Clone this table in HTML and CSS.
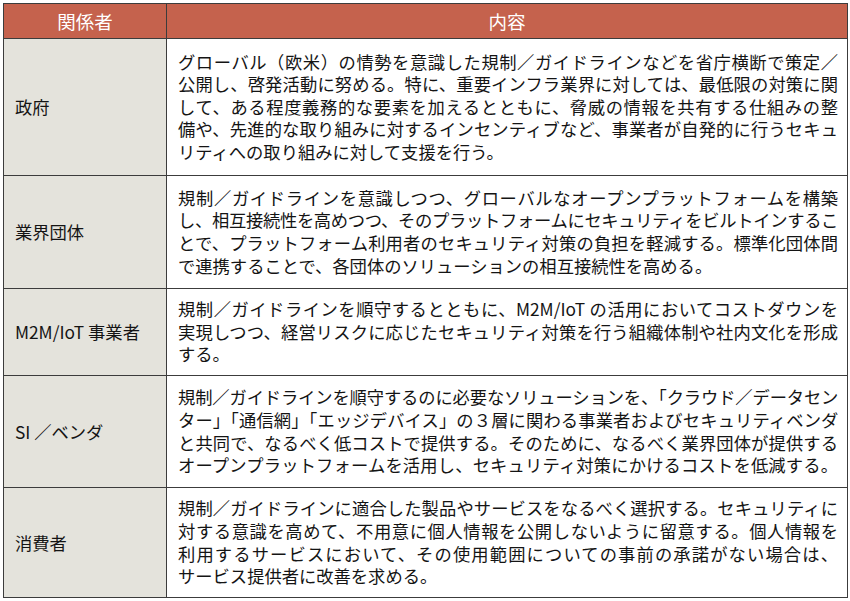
FILE: index.html
```html
<!DOCTYPE html>
<html lang="ja">
<head>
<meta charset="utf-8">
<link rel="stylesheet" href="styles.css">
</head>
<body>
<div class="page">
<table class="matrix">
  <colgroup><col class="c-who"><col class="c-what"></colgroup>
  <thead>
    <tr class="r-head"><th>関係者</th><th>内容</th></tr>
  </thead>
  <tbody>
    <tr class="r1">
      <td class="who">政府</td>
      <td class="what">
        <span class="ln">グローバル（欧米）の情勢を意識した規制／ガイドラインなどを省庁横断で策定／</span>
        <span class="ln">公開し、啓発活動に努める。特に、重要インフラ業界に対しては、最低限の対策に関</span>
        <span class="ln">して、ある程度義務的な要素を加えるとともに、脅威の情報を共有する仕組みの整</span>
        <span class="ln">備や、先進的な取り組みに対するインセンティブなど、事業者が自発的に行うセキュ</span>
        <span class="ln last">リティへの取り組みに対して支援を行う。</span>
      </td>
    </tr>
    <tr class="r2">
      <td class="who">業界団体</td>
      <td class="what">
        <span class="ln">規制／ガイドラインを意識しつつ、グローバルなオープンプラットフォームを構築</span>
        <span class="ln tight">し、相互接続性を高めつつ、そのプラットフォームにセキュリティをビルトインするこ</span>
        <span class="ln">とで、プラットフォーム利用者のセキュリティ対策の負担を軽減する。標準化団体間</span>
        <span class="ln last">で連携することで、各団体のソリューションの相互接続性を高める。</span>
      </td>
    </tr>
    <tr class="r3">
      <td class="who">M2M/IoT 事業者</td>
      <td class="what">
        <span class="ln">規制／ガイドラインを順守するとともに、M2M/IoT の活用においてコストダウンを</span>
        <span class="ln">実現しつつ、経営リスクに応じたセキュリティ対策を行う組織体制や社内文化を形成</span>
        <span class="ln last">する。</span>
      </td>
    </tr>
    <tr class="r4">
      <td class="who">SI ／ベンダ</td>
      <td class="what">
        <span class="ln tight">規制／ガイドラインを順守するのに必要なソリューションを、「クラウド／データセン</span>
        <span class="ln tight">ター」「通信網」「エッジデバイス」の３層に関わる事業者およびセキュリティベンダ</span>
        <span class="ln">と共同で、なるべく低コストで提供する。そのために、なるべく業界団体が提供する</span>
        <span class="ln">オープンプラットフォームを活用し、セキュリティ対策にかけるコストを低減する。</span>
      </td>
    </tr>
    <tr class="r5">
      <td class="who">消費者</td>
      <td class="what">
        <span class="ln">規制／ガイドラインに適合した製品やサービスをなるべく選択する。セキュリティに</span>
        <span class="ln">対する意識を高めて、不用意に個人情報を公開しないように留意する。個人情報を</span>
        <span class="ln">利用するサービスにおいて、その使用範囲についての事前の承諾がない場合は、</span>
        <span class="ln last">サービス提供者に改善を求める。</span>
      </td>
    </tr>
  </tbody>
</table>
</div>
</body>
</html>
```
FILE: styles.css
```css
html, body {
  margin: 0;
  padding: 0;
  background: #ffffff;
}
.page {
  padding: 3px;
}
.matrix {
  border-collapse: collapse;
  table-layout: fixed;
  width: 844px;
  height: 594px;
  font-family: "Noto Sans CJK JP", "Noto Sans", sans-serif;
  color: #141414;
  border: 1px solid #3c3c3c;
}
.c-who { width: 163px; }
.c-what { width: 681px; }
.matrix th, .matrix td {
  border: 1px solid #3c3c3c;
  padding: 0;
  vertical-align: middle;
}
.matrix th {
  background: #c5624d;
  color: #ffffff;
  font-weight: normal;
  font-size: 18.5px;
  line-height: 24px;
  text-align: center;
}
.r-head { height: 35px; }
.r1 { height: 137px; }
.r2 { height: 113px; }
.r3 { height: 87px; }
.r4 { height: 112px; }
.r5 { height: 110px; }
.who {
  background: #e4e3dc;
  font-size: 17.3px;
  line-height: 22px;
  padding-left: 11px !important;
  white-space: nowrap;
}
.what {
  font-size: 17.3px;
  line-height: 22.6px;
  padding: 0 9px 0 11px !important;
}
.ln {
  display: block;
  white-space: nowrap;
  text-align: justify;
  text-align-last: justify;
}
.ln.tight {
  letter-spacing: -0.4px;
}
.ln.last {
  text-align-last: left;
}
```
